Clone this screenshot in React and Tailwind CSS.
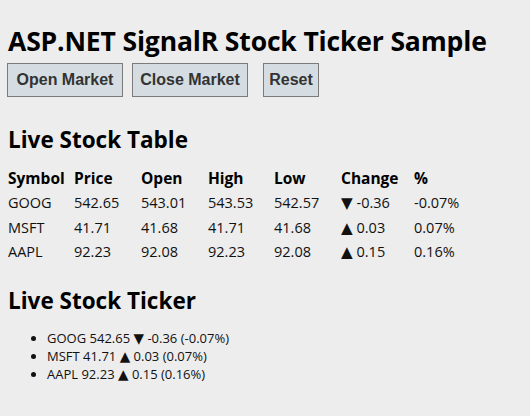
const stocks = [
  { symbol: 'GOOG', price: '542.65', open: '543.01', high: '543.53', low: '542.57', change: '-0.36', pct: '-0.07%', up: false },
  { symbol: 'MSFT', price: '41.71', open: '41.68', high: '41.71', low: '41.68', change: '0.03', pct: '0.07%', up: true },
  { symbol: 'AAPL', price: '92.23', open: '92.08', high: '92.23', low: '92.08', change: '0.15', pct: '0.16%', up: true },
];

const cols = ['Symbol', 'Price', 'Open', 'High', 'Low', 'Change', '%'];
const widths = ['w-[66px]', 'w-[67px]', 'w-[67px]', 'w-[66px]', 'w-[67px]', 'w-[73px]', 'w-[60px]'];

function Arrow({ up }) {
  return <span className="font-['DejaVu_Sans',sans-serif] text-[1.05em] leading-none">{up ? '▲' : '▼'}</span>;
}

function Button({ children, className }) {
  return (
    <button className={`h-[34px] border border-[#7b7b7b] bg-[#d5dde2] p-0 text-center font-['Liberation_Sans',Arial,sans-serif] text-[16px] font-bold text-[#333] ${className}`}>
      {children}
    </button>
  );
}

export default function App() {
  return (
    <div className="min-h-[416px] bg-[#ededed] px-[8px] pt-[26px] font-['Open_Sans',sans-serif] text-black">
      <h1 className="text-[26.5px] font-bold leading-[30px] tracking-[-0.15px]">ASP.NET SignalR Stock Ticker Sample</h1>
      <div className="mt-[7px] flex">
        <Button className="ml-[-1px] w-[116px]">Open Market</Button>
        <Button className="ml-[9px] w-[116px]">Close Market</Button>
        <Button className="ml-[15px] w-[56px]">Reset</Button>
      </div>

      <h2 className="mt-[29px] text-[22.5px] font-bold leading-[28px]">Live Stock Table</h2>
      <table className="mt-[13px] text-[14.5px] text-[#111]">
        <thead>
          <tr>
            {cols.map((c, i) => (
              <th key={c} className={`${widths[i]} h-[24px] p-0 text-left text-[15.5px] font-bold text-black`}>{c}</th>
            ))}
          </tr>
        </thead>
        <tbody>
          {stocks.map((s) => (
            <tr key={s.symbol} className="h-[24.5px]">
              <td className="p-0">{s.symbol}</td>
              <td className="p-0">{s.price}</td>
              <td className="p-0">{s.open}</td>
              <td className="p-0">{s.high}</td>
              <td className="p-0">{s.low}</td>
              <td className="p-0"><Arrow up={s.up} /> {s.change}</td>
              <td className="p-0">{s.pct}</td>
            </tr>
          ))}
        </tbody>
      </table>

      <h2 className="mt-[22px] text-[22.5px] font-bold leading-[28px]">Live Stock Ticker</h2>
      <ul className="mt-[14px] list-disc pl-[39px] text-[13px] leading-[18px] text-[#111]">
        {stocks.map((s) => (
          <li key={s.symbol}>
            {s.symbol} {s.price} <Arrow up={s.up} /> {s.change} ({s.pct})
          </li>
        ))}
      </ul>
    </div>
  );
}
